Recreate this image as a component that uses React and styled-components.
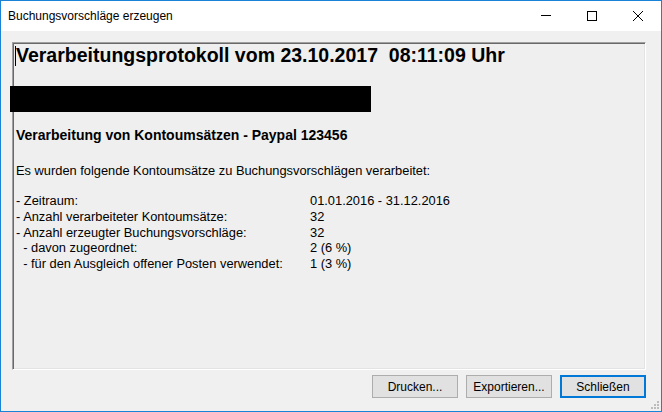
import React from "react";
import styled, { createGlobalStyle } from "styled-components";

const Global = createGlobalStyle`
  html, body { margin: 0; padding: 0; background: #ffffff; }
  body { width: 662px; height: 412px; overflow: hidden; }
`;

const Window = styled.div`
  box-sizing: border-box;
  width: 662px;
  height: 412px;
  border: 1px solid #1883d7;
  display: flex;
  flex-direction: column;
  background: #f0f0f0;
  position: relative;
`;

const TitleBar = styled.div`
  height: 30px;
  background: #ffffff;
  display: flex;
  align-items: center;
`;

const Title = styled.div`
  flex: 1;
  padding-left: 7px;
  font-family: "Liberation Sans", Arial, sans-serif;
  font-size: 12px;
  color: #000;
`;

const CaptionButton = styled.div`
  width: 46px;
  height: 30px;
  display: flex;
  align-items: center;
  justify-content: center;
`;

const Body = styled.div`
  flex: 1;
  display: flex;
  flex-direction: column;
  padding: 11px 15px 13px 11px;
  gap: 5px;
`;

const Panel = styled.div`
  flex: 1;
  background: #efefef;
  border-top: 1px solid #a0a0a0;
  border-left: 1px solid #a0a0a0;
  border-right: 1px solid #ffffff;
  border-bottom: 1px solid #ffffff;
  box-shadow: inset 1px 1px 0 #696969, inset -1px -1px 0 #e3e3e3;
  padding: 0 0 0 3px;
  font-family: "Liberation Sans", Arial, sans-serif;
  color: #000;
`;

const Heading = styled.div`
  font-size: 19.5px;
  font-weight: bold;
  line-height: 23px;
  margin-top: 1px;
  white-space: pre;
  position: relative;
`;

const Caret = styled.span`
  position: absolute;
  left: -1px;
  top: 2px;
  width: 1px;
  height: 20px;
  background: #000;
`;

const Redaction = styled.div`
  width: 361px;
  height: 26px;
  background: #000;
  margin: 19px 0 0 -6px;
`;

const SubHeading = styled.div`
  font-size: 14px;
  font-weight: bold;
  line-height: 17px;
  margin-top: 15px;
`;

const Text = styled.div`
  font-size: 12.85px;
  line-height: 16px;
  margin-top: ${(p) => p.$mt || 0}px;
  white-space: pre;
`;

const Stats = styled.div`
  display: grid;
  grid-template-columns: 294px auto;
  font-size: 12.85px;
  line-height: 15.8px;
  margin-top: 14px;
  white-space: pre;
`;

const Footer = styled.div`
  display: flex;
  justify-content: flex-end;
  gap: 8px;
`;

const Button = styled.button`
  box-sizing: border-box;
  width: 86px;
  height: 23px;
  background: #e1e1e1;
  border: ${(p) => (p.$default ? "2px solid #0078d7" : "1px solid #adadad")};
  font-family: "Liberation Sans", Arial, sans-serif;
  font-size: 12px;
  color: #000;
  padding: 0;
  display: flex;
  align-items: center;
  justify-content: center;
`;

const Grip = styled.svg`
  position: absolute;
  right: 1px;
  bottom: 1px;
`;

const stats = [
  ["- Zeitraum:", "01.01.2016 - 31.12.2016"],
  ["- Anzahl verarbeiteter Kontoumsätze:", "32"],
  ["- Anzahl erzeugter Buchungsvorschläge:", "32"],
  ["  - davon zugeordnet:", "2 (6 %)"],
  ["  - für den Ausgleich offener Posten verwendet:", "1 (3 %)"],
];

export default function App() {
  return (
    <>
      <Global />
      <Window>
        <TitleBar>
          <Title>Buchungsvorschläge erzeugen</Title>
          <CaptionButton>
            <svg width="10" height="10" viewBox="0 0 10 10">
              <rect x="0" y="4" width="10" height="1" fill="#000" />
            </svg>
          </CaptionButton>
          <CaptionButton>
            <svg width="10" height="10" viewBox="0 0 10 10">
              <rect x="0.5" y="0.5" width="9" height="9" fill="none" stroke="#000" strokeWidth="1" />
            </svg>
          </CaptionButton>
          <CaptionButton>
            <svg width="10" height="10" viewBox="0 0 10 10">
              <path d="M0 0 L10 10 M10 0 L0 10" stroke="#000" strokeWidth="1" />
            </svg>
          </CaptionButton>
        </TitleBar>
        <Body>
          <Panel>
            <Heading>
              <Caret />
              {"Verarbeitungsprotokoll vom 23.10.2017  08:11:09 Uhr"}
            </Heading>
            <Redaction />
            <SubHeading>Verarbeitung von Kontoumsätzen - Paypal 123456</SubHeading>
            <Text $mt={19}>Es wurden folgende Kontoumsätze zu Buchungsvorschlägen verarbeitet:</Text>
            <Stats>
              {stats.map(([l, v]) => (
                <React.Fragment key={l}>
                  <span>{l}</span>
                  <span>{v}</span>
                </React.Fragment>
              ))}
            </Stats>
          </Panel>
          <Footer>
            <Button>Drucken...</Button>
            <Button>Exportieren...</Button>
            <Button $default>Schließen</Button>
          </Footer>
        </Body>
        <Grip width="12" height="12" viewBox="0 0 12 12">
          {[
            [9, 3], [9, 6], [6, 6], [9, 9], [6, 9], [3, 9],
          ].map(([x, y]) => (
            <rect key={`${x}-${y}`} x={x} y={y} width="2" height="2" fill="#bcbcbc" />
          ))}
        </Grip>
      </Window>
    </>
  );
}
